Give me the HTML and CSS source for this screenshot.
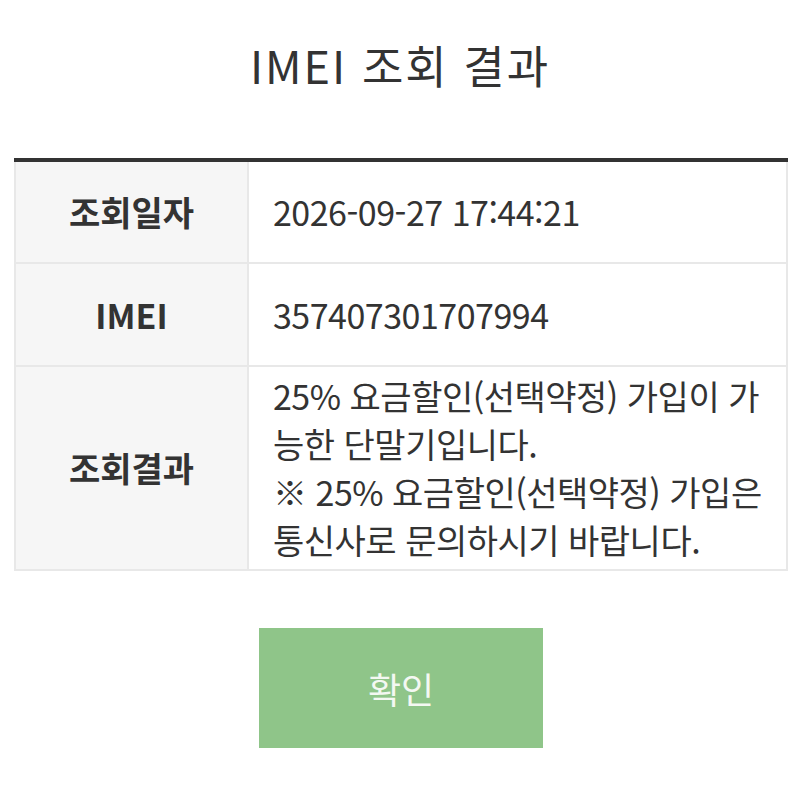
FILE: index.html
```html
<!DOCTYPE html>
<html lang="ko">
<head>
    <meta charset="UTF-8">
    <meta name="viewport" content="width=device-width, initial-scale=1.0">
    <title>IMEI 조회 결과</title>
    <link rel="stylesheet" href="styles.css">
</head>
<body>

    <h1 class="title">IMEI 조회 결과</h1>

    <table class="result-table">
        <tr>
            <th>조회일자</th>
            <td>2026-09-27 17:44:21</td>
        </tr>
        <tr>
            <th>IMEI</th>
            <td>357407301707994</td>
        </tr>
        <tr>
            <th>조회결과</th>
            <td class="multi">25% 요금할인(선택약정) 가입이 가능한 단말기입니다.<br>※ 25% 요금할인(선택약정) 가입은 통신사로 문의하시기 바랍니다.</td>
        </tr>
    </table>

    <div class="actions">
        <button class="btn-ok">확인</button>
    </div>

</body>
</html>
```

FILE: styles.css
```css
/* 기본 */
body {
    font-family: "Noto Sans CJK KR", "Noto Sans", sans-serif;
    background-color: #ffffff;
    color: #333333;
    margin: 0;
    padding: 0;
}
.title {
    font-size: 45px;
    font-weight: 400;
    line-height: 60px;
    letter-spacing: 2px;
    text-align: center;
    margin: 35px 0 63px;
}
.result-table {
    width: calc(100% - 26px);
    margin: 0 12px 0 14px;
    border-collapse: collapse;
    border-top: 4px solid #333333;
}
.result-table th,
.result-table td {
    border: 2px solid #e8e8e8;
    font-size: 34px;
    line-height: 48px;
    height: 103px;
    vertical-align: middle;
    box-sizing: border-box;
}
.result-table th {
    width: 233px;
    background-color: #f6f6f6;
    font-weight: 700;
    text-align: center;
    padding: 0;
}
.result-table td {
    padding: 4px 16px 4px 24px;
    text-align: left;
    letter-spacing: -0.5px;
}
.result-table td.multi {
    height: 204px;
}
.actions {
    display: flex;
    justify-content: center;
    margin-top: 57px;
    padding-left: 2px;
}
.btn-ok {
    width: 284px;
    height: 120px;
    background-color: #8fc589;
    color: #f4f8f2;
    border: none;
    font-family: inherit;
    font-size: 36px;
    cursor: pointer;
}
```
